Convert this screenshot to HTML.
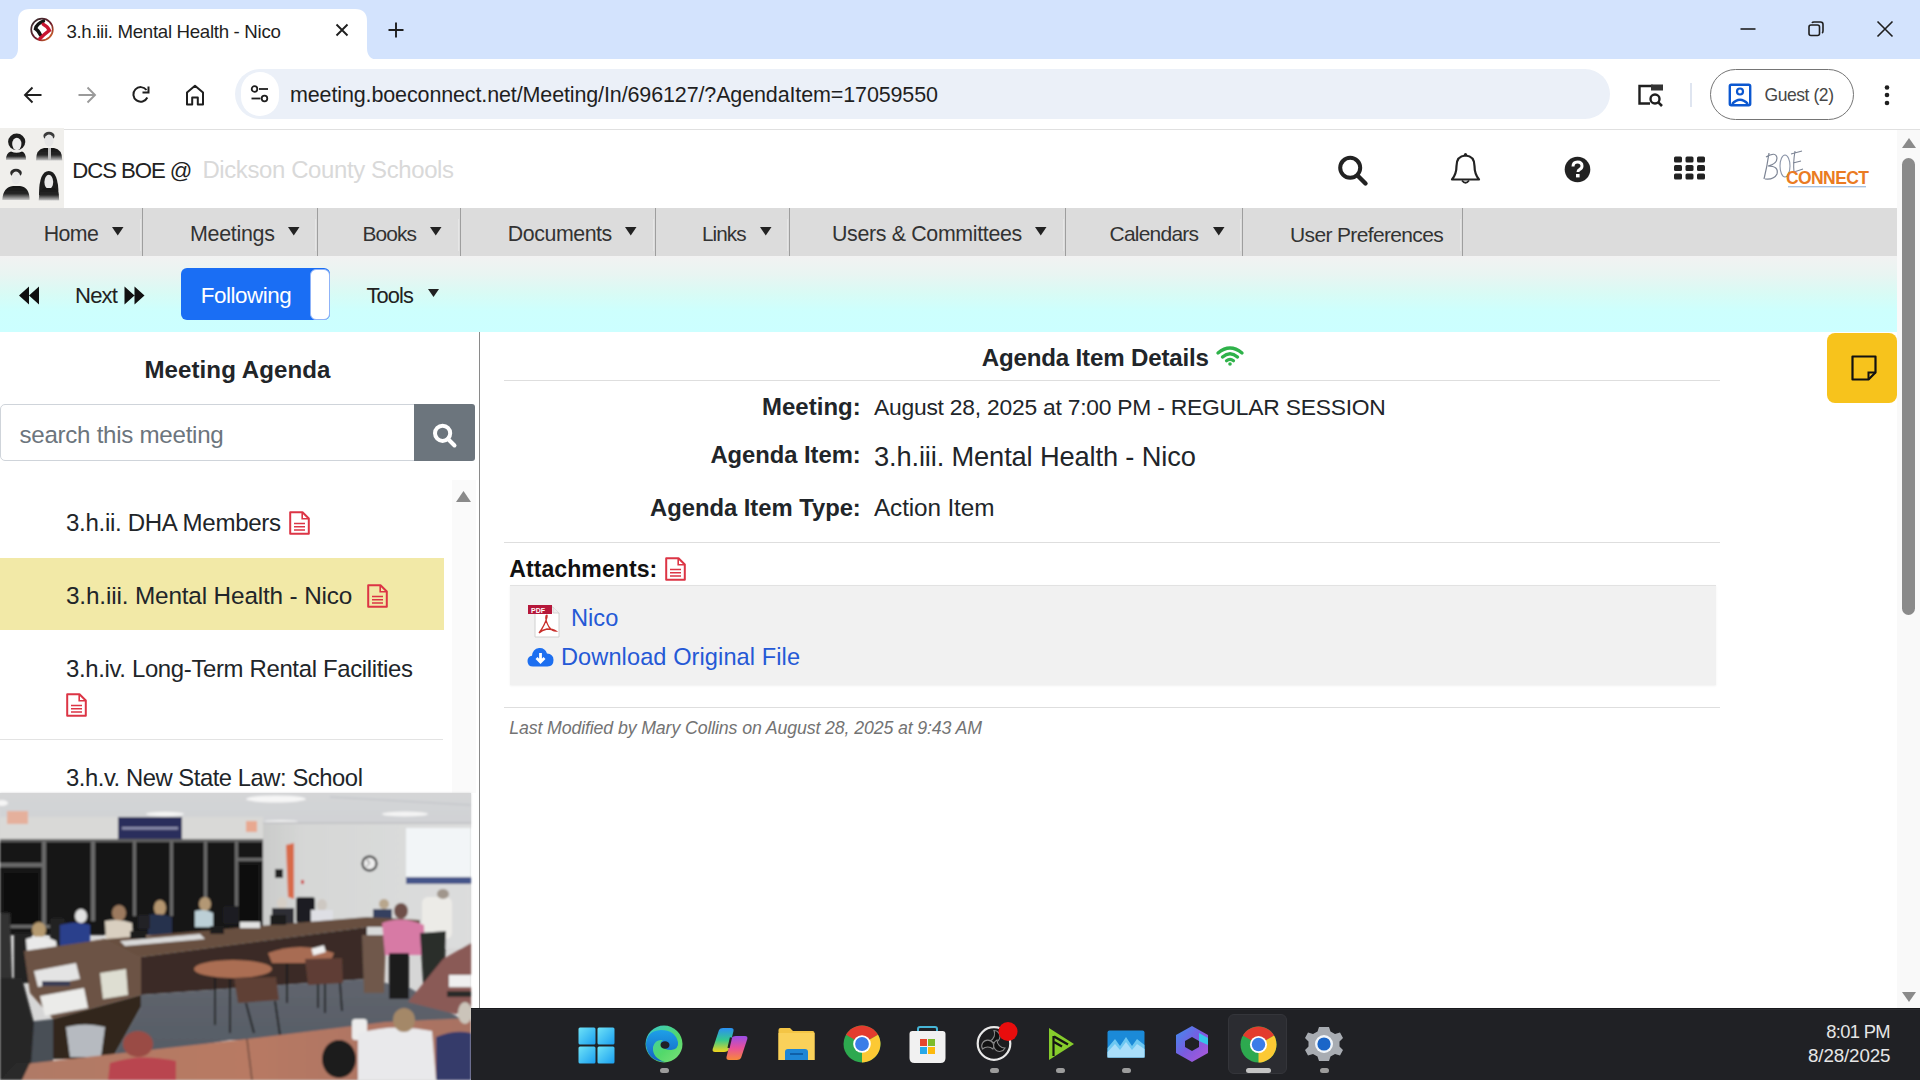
<!DOCTYPE html>
<html><head><meta charset="utf-8"><title>3.h.iii. Mental Health - Nico</title>
<style>
*{margin:0;padding:0;box-sizing:border-box}
html,body{width:1920px;height:1080px;overflow:hidden;background:#fff;font-family:"Liberation Sans",sans-serif;color:#212529}
.a{position:absolute}
.t{position:absolute;white-space:nowrap;line-height:1}
svg{display:block;overflow:visible}
</style></head><body>
<div class="a" style="left:0;top:0;width:1920px;height:59px;background:#d3e3fd"></div>
<svg class="a" style="left:0;top:0" width="400" height="60"><path d="M6 60 Q18 60 18 48 L18 21 Q18 9 30 9 L355 9 Q367 9 367 21 L367 48 Q367 60 379 60 Z" fill="#fff"/></svg>
<svg class="a" style="left:30px;top:18px" width="24" height="24" viewBox="0 0 24 24">
<defs><linearGradient id="fr" x1="0" y1="0" x2="1" y2="1"><stop offset="0" stop-color="#333"/><stop offset="0.55" stop-color="#6a1b2a"/><stop offset="1" stop-color="#e8742c"/></linearGradient></defs>
<circle cx="12" cy="11.5" r="10.8" fill="#fff" stroke="url(#fr)" stroke-width="1.7"/>
<path d="M13.5 3.2 Q6.5 6 5.5 10.8 Q8.5 12.5 10.5 17.2" fill="none" stroke="#151515" stroke-width="3.4" stroke-linecap="round"/>
<path d="M13.2 6.2 Q17.8 8.5 19.4 12.4 Q14.5 16 9.8 20.8" fill="none" stroke="#c81430" stroke-width="3.4" stroke-linecap="round"/>
</svg>
<div class="t" style="left:66.40px;top:23.00px;font-size:18.72px;letter-spacing:-0.324px;color:#1f1f1f;font-weight:normal;font-style:normal;">3.h.iii. Mental Health - Nico</div>
<svg class="a" style="left:334px;top:22px" width="16" height="16" viewBox="0 0 16 16"><path d="M2.5 2.5 L13.5 13.5 M13.5 2.5 L2.5 13.5" stroke="#1f1f1f" stroke-width="1.9"/></svg>
<svg class="a" style="left:387px;top:21px" width="18" height="18" viewBox="0 0 18 18"><path d="M9 1.5 V16.5 M1.5 9 H16.5" stroke="#1f1f1f" stroke-width="1.9"/></svg>
<svg class="a" style="left:1738px;top:19px" width="20" height="20" viewBox="0 0 20 20"><path d="M2.5 10 H17.5" stroke="#1f1f1f" stroke-width="1.6"/></svg>
<svg class="a" style="left:1806px;top:19px" width="20" height="20" viewBox="0 0 20 20"><rect x="3" y="6" width="10.5" height="10.5" rx="2" fill="none" stroke="#1f1f1f" stroke-width="1.6"/><path d="M6 4 Q6.5 3 8 3 H14.5 Q17 3 17 5.5 V12 Q17 13.5 16 14" fill="none" stroke="#1f1f1f" stroke-width="1.6"/></svg>
<svg class="a" style="left:1875px;top:19px" width="20" height="20" viewBox="0 0 20 20"><path d="M2.5 2.5 L17.5 17.5 M17.5 2.5 L2.5 17.5" stroke="#1f1f1f" stroke-width="1.6"/></svg>
<div class="a" style="left:0;top:59px;width:1920px;height:70px;background:#fff"></div>
<div class="a" style="left:0;top:129px;width:1920px;height:1px;background:#e0e0e0"></div>
<svg class="a" style="left:23px;top:85px" width="20" height="20" viewBox="0 0 20 20"><path d="M18.5 10 H2.5 M9.5 2.5 L2 10 L9.5 17.5" fill="none" stroke="#1f1f1f" stroke-width="1.9"/></svg>
<svg class="a" style="left:77px;top:85px" width="20" height="20" viewBox="0 0 20 20"><path d="M1.5 10 H17.5 M10.5 2.5 L18 10 L10.5 17.5" fill="none" stroke="#9a9a9a" stroke-width="1.9"/></svg>
<svg class="a" style="left:131px;top:85px" width="20" height="20" viewBox="0 0 20 20"><path d="M16.3 12.5 A7.3 7.3 0 1 1 15.5 5" fill="none" stroke="#1f1f1f" stroke-width="2"/><path d="M17.5 1.5 V7.5 H11.5" fill="none" stroke="#1f1f1f" stroke-width="2"/></svg>
<svg class="a" style="left:185px;top:84px" width="20" height="22" viewBox="0 0 20 22"><path d="M2 20.5 V8.5 L10 1.8 L18 8.5 V20.5 H12.8 V13.5 H7.2 V20.5 Z" fill="none" stroke="#1f1f1f" stroke-width="2" stroke-linejoin="round"/></svg>
<div class="a" style="left:235px;top:69px;width:1375px;height:50px;background:#ebf0f8;border-radius:25px"></div>
<div class="a" style="left:241px;top:72px;width:38px;height:44px;background:#fff;border-radius:22px"></div>
<svg class="a" style="left:249px;top:83px" width="22" height="22" viewBox="0 0 22 22"><circle cx="5.5" cy="6" r="2.8" fill="none" stroke="#1f1f1f" stroke-width="1.8"/><path d="M10 6 H19" stroke="#1f1f1f" stroke-width="1.8"/><circle cx="15.5" cy="15.5" r="2.8" fill="none" stroke="#1f1f1f" stroke-width="1.8"/><path d="M2.5 15.5 H11.5" stroke="#1f1f1f" stroke-width="1.8"/></svg>
<div class="t" style="left:290.00px;top:85.00px;font-size:21.50px;letter-spacing:-0.128px;color:#1f1f1f;font-weight:normal;font-style:normal;">meeting.boeconnect.net/Meeting/In/696127/?AgendaItem=17059550</div>
<svg class="a" style="left:1637px;top:83px" width="28" height="26" viewBox="0 0 28 26"><path d="M13 20.5 H2.5 V3 H16" fill="none" stroke="#1f1f1f" stroke-width="2.4"/><rect x="14" y="1.5" width="12" height="6" fill="#333"/><circle cx="18" cy="16" r="4.5" fill="none" stroke="#1f1f1f" stroke-width="2.4"/><path d="M21.3 19.3 L25 23" stroke="#1f1f1f" stroke-width="2.6"/></svg>
<div class="a" style="left:1690px;top:83px;width:2px;height:24px;background:#dfe5f0"></div>
<div class="a" style="left:1710px;top:69px;width:144px;height:51px;border:1.6px solid #757575;border-radius:26px"></div>
<svg class="a" style="left:1728px;top:83px" width="24" height="24" viewBox="0 0 24 24"><rect x="1.8" y="1.8" width="20.4" height="20.4" rx="1.5" fill="none" stroke="#0b57d0" stroke-width="2.4"/><circle cx="12" cy="8.5" r="3" fill="none" stroke="#0b57d0" stroke-width="2.2"/><path d="M4 21 Q12 12.5 20 21" fill="none" stroke="#0b57d0" stroke-width="2.4"/></svg>
<div class="t" style="left:1764.50px;top:87.00px;font-size:17.49px;letter-spacing:-0.427px;color:#474747;font-weight:normal;font-style:normal;">Guest (2)</div>
<svg class="a" style="left:1881px;top:84px" width="12" height="24" viewBox="0 0 12 24"><circle cx="6" cy="3.5" r="2.3" fill="#1f1f1f"/><circle cx="6" cy="11" r="2.3" fill="#1f1f1f"/><circle cx="6" cy="19" r="2.3" fill="#1f1f1f"/></svg>
<div class="a" style="left:0;top:130px;width:1897px;height:78px;background:#fff"></div>
<svg class="a" style="left:0;top:130px" width="64" height="78" viewBox="0 2 64 78">
<defs><linearGradient id="pg" x1="0" y1="0" x2="0" y2="1"><stop offset="0" stop-color="#151515"/><stop offset="0.55" stop-color="#262626"/><stop offset="1" stop-color="#c8c8c8"/></linearGradient>
<filter id="lb"><feGaussianBlur stdDeviation="0.45"/></filter></defs>
<rect width="64" height="80" fill="#f0efec"/>
<g filter="url(#lb)">
<ellipse cx="16.7" cy="13.8" rx="8.6" ry="8.3" fill="#1c1c1c"/>
<ellipse cx="16.8" cy="16" rx="4.6" ry="6.2" fill="#ececec"/>
<path d="M6 32 Q6 24.5 11 23.5 Q16.5 26 22 23.5 Q26 24.5 26 32 Z" fill="url(#pg)"/>
<ellipse cx="49" cy="8" rx="5.6" ry="4.2" fill="#3a3a3a"/>
<ellipse cx="49" cy="12.5" rx="4.6" ry="6" fill="#e6e6e6"/>
<path d="M36 32.5 Q36 21 44 20 L54 20 Q62.3 21 62.3 32.5 Z" fill="url(#pg)"/>
<rect x="48" y="20" width="3" height="12" fill="#bdbdbd"/>
<ellipse cx="16" cy="45" rx="5.8" ry="4.2" fill="#2c2c2c"/>
<ellipse cx="16" cy="50" rx="4.6" ry="6.5" fill="#e8e8e8"/>
<path d="M2.3 72 Q3 59 13 58 L20 58 Q29.6 59 29.6 72 Z" fill="url(#pg)"/>
<path d="M39 67 Q39 43 48.8 43 Q58.5 43 58.5 67 Z" fill="#1e1e1e"/>
<ellipse cx="48.8" cy="54" rx="4.4" ry="7.2" fill="#e8e8e8"/>
<path d="M38.7 72.5 Q39 61 44 60 L54 60 Q59.2 61 59.2 72.5 Z" fill="url(#pg)"/>
</g></svg>
<div class="t" style="left:72.30px;top:160.00px;font-size:22.19px;letter-spacing:-1.074px;color:#222;font-weight:normal;font-style:normal;">DCS BOE @</div>
<div class="t" style="left:202.40px;top:158.00px;font-size:23.94px;letter-spacing:-0.373px;color:#d9d9d9;font-weight:normal;font-style:normal;">Dickson County Schools</div>
<svg class="a" style="left:1336px;top:154px" width="34" height="34" viewBox="0 0 34 34"><circle cx="14.2" cy="13.8" r="10" fill="none" stroke="#222" stroke-width="4"/><path d="M21.5 21.5 L29.5 29.5" stroke="#222" stroke-width="4.4" stroke-linecap="round"/></svg>
<svg class="a" style="left:1450px;top:152px" width="32" height="34" viewBox="0 0 32 34"><path d="M15.5 3.5 Q24.5 4 24.5 14 Q24.5 22 29 27.5 H2 Q6.5 22 6.5 14 Q6.5 4 15.5 3.5 Z" fill="none" stroke="#222" stroke-width="2.2" stroke-linejoin="round"/><path d="M12 28.5 Q15.5 33 19 28.5" fill="none" stroke="#222" stroke-width="1.8"/><circle cx="15.5" cy="2.5" r="1.6" fill="#222"/></svg>
<svg class="a" style="left:1564px;top:156px" width="27" height="27" viewBox="0 0 27 27"><circle cx="13.5" cy="13.5" r="12.8" fill="#222"/><path d="M9 10.5 Q9 6 13.5 6 Q18 6 18 10 Q18 12.5 15.5 13.5 Q14 14.2 14 16" fill="none" stroke="#fff" stroke-width="3"/><rect x="12" y="18" width="3.6" height="3.4" fill="#fff"/></svg>
<svg class="a" style="left:1673px;top:155px" width="33" height="26" viewBox="0 0 33 26"><g fill="#222">
<rect x="1" y="1.5" width="8" height="6" rx="1.5"/><rect x="12.5" y="1.5" width="8" height="6" rx="1.5"/><rect x="24" y="1.5" width="8" height="6" rx="1.5"/>
<rect x="1" y="10" width="8" height="6" rx="1.5"/><rect x="12.5" y="10" width="8" height="6" rx="1.5"/><rect x="24" y="10" width="8" height="6" rx="1.5"/>
<rect x="1" y="18.5" width="8" height="6" rx="1.5"/><rect x="12.5" y="18.5" width="8" height="6" rx="1.5"/><rect x="24" y="18.5" width="8" height="6" rx="1.5"/>
</g></svg>
<svg class="a" style="left:1760px;top:145px" width="112" height="46" viewBox="0 0 112 46">
<path d="M9 8 Q7 22 4 34 M6 12 Q16 6 17 13 Q17 19 8 21 Q19 21 17 29 Q14 35 5 34" fill="none" stroke="#7d8595" stroke-width="1.2"/>
<ellipse cx="25" cy="21" rx="5" ry="11" fill="none" stroke="#8a94a8" stroke-width="1.1"/>
<path d="M31 9 L42 6 M35 6 Q33 18 34 27 M33 18 L41 16 M34 27 L43 24" fill="none" stroke="#7d8595" stroke-width="1.1"/>
<text x="26" y="38.5" font-family="Liberation Sans" font-weight="bold" font-size="17.5" fill="#ea7b23" letter-spacing="-0.6">CONNECT</text>
<rect x="28" y="41" width="78" height="1.4" fill="#a9c2e0"/>
</svg>
<div class="a" style="left:0;top:208px;width:1897px;height:48px;background:#dcdcdc"></div>
<div class="t" style="left:43.75px;top:224.00px;font-size:21.33px;letter-spacing:-0.631px;color:#333;font-weight:normal;font-style:normal;">Home</div>
<svg class="a" style="left:112.0px;top:227px" width="12" height="9" viewBox="0 0 12 9"><path d="M0 0 H11.5 L5.75 8.5 Z" fill="#222"/></svg>
<div class="t" style="left:190.00px;top:224.00px;font-size:21.46px;letter-spacing:-0.297px;color:#333;font-weight:normal;font-style:normal;">Meetings</div>
<svg class="a" style="left:287.5px;top:227px" width="12" height="9" viewBox="0 0 12 9"><path d="M0 0 H11.5 L5.75 8.5 Z" fill="#222"/></svg>
<div class="t" style="left:362.50px;top:224.00px;font-size:20.93px;letter-spacing:-0.914px;color:#333;font-weight:normal;font-style:normal;">Books</div>
<svg class="a" style="left:430.0px;top:227px" width="12" height="9" viewBox="0 0 12 9"><path d="M0 0 H11.5 L5.75 8.5 Z" fill="#222"/></svg>
<div class="t" style="left:507.80px;top:224.00px;font-size:21.35px;letter-spacing:-0.432px;color:#333;font-weight:normal;font-style:normal;">Documents</div>
<svg class="a" style="left:625.0px;top:227px" width="12" height="9" viewBox="0 0 12 9"><path d="M0 0 H11.5 L5.75 8.5 Z" fill="#222"/></svg>
<div class="t" style="left:702.00px;top:224.00px;font-size:20.71px;letter-spacing:-0.959px;color:#333;font-weight:normal;font-style:normal;">Links</div>
<svg class="a" style="left:759.5px;top:227px" width="12" height="9" viewBox="0 0 12 9"><path d="M0 0 H11.5 L5.75 8.5 Z" fill="#222"/></svg>
<div class="t" style="left:832.00px;top:224.00px;font-size:21.38px;letter-spacing:-0.338px;color:#333;font-weight:normal;font-style:normal;">Users &amp; Committees</div>
<svg class="a" style="left:1034.5px;top:227px" width="12" height="9" viewBox="0 0 12 9"><path d="M0 0 H11.5 L5.75 8.5 Z" fill="#222"/></svg>
<div class="t" style="left:1109.50px;top:224.00px;font-size:20.94px;letter-spacing:-0.740px;color:#333;font-weight:normal;font-style:normal;">Calendars</div>
<svg class="a" style="left:1212.5px;top:227px" width="12" height="9" viewBox="0 0 12 9"><path d="M0 0 H11.5 L5.75 8.5 Z" fill="#222"/></svg>
<div class="t" style="left:1290.00px;top:224.00px;font-size:20.99px;letter-spacing:-0.635px;color:#333;font-weight:normal;font-style:normal;">User Preferences</div>
<div class="a" style="left:142.0px;top:208px;width:1.3px;height:48px;background:#9e9e9e"></div>
<div class="a" style="left:140.0px;top:219px;width:1.2px;height:32px;background:#e6e6e6"></div>
<div class="a" style="left:317.0px;top:208px;width:1.3px;height:48px;background:#9e9e9e"></div>
<div class="a" style="left:315.0px;top:219px;width:1.2px;height:32px;background:#e6e6e6"></div>
<div class="a" style="left:460.0px;top:208px;width:1.3px;height:48px;background:#9e9e9e"></div>
<div class="a" style="left:458.0px;top:219px;width:1.2px;height:32px;background:#e6e6e6"></div>
<div class="a" style="left:654.5px;top:208px;width:1.3px;height:48px;background:#9e9e9e"></div>
<div class="a" style="left:652.5px;top:219px;width:1.2px;height:32px;background:#e6e6e6"></div>
<div class="a" style="left:789.2px;top:208px;width:1.3px;height:48px;background:#9e9e9e"></div>
<div class="a" style="left:787.2px;top:219px;width:1.2px;height:32px;background:#e6e6e6"></div>
<div class="a" style="left:1065.0px;top:208px;width:1.3px;height:48px;background:#9e9e9e"></div>
<div class="a" style="left:1063.0px;top:219px;width:1.2px;height:32px;background:#e6e6e6"></div>
<div class="a" style="left:1242.0px;top:208px;width:1.3px;height:48px;background:#9e9e9e"></div>
<div class="a" style="left:1240.0px;top:219px;width:1.2px;height:32px;background:#e6e6e6"></div>
<div class="a" style="left:1461.5px;top:208px;width:1.3px;height:48px;background:#9e9e9e"></div>
<div class="a" style="left:1459.5px;top:219px;width:1.2px;height:32px;background:#e6e6e6"></div>
<div class="a" style="left:0;top:256px;width:1897px;height:76px;background:linear-gradient(#f2f2f2 0%,#e8f5f2 25%,#d8fbf5 50%,#cdfffd 72%,#ccffff 100%)"></div>
<svg class="a" style="left:19px;top:286px" width="21" height="19" viewBox="0 0 21 19"><path d="M0 9.5 L10 0.5 V18.5 Z M10 9.5 L20 0.5 V18.5 Z" fill="#111"/></svg>
<div class="t" style="left:75.00px;top:285.00px;font-size:22.08px;letter-spacing:-0.803px;color:#222;font-weight:normal;font-style:normal;">Next</div>
<svg class="a" style="left:124px;top:286px" width="21" height="19" viewBox="0 0 21 19"><path d="M0.5 0.5 L10.5 9.5 L0.5 18.5 Z M10.5 0.5 L20.5 9.5 L10.5 18.5 Z" fill="#111"/></svg>
<div class="a" style="left:181px;top:268px;width:149px;height:52px;background:#1a6ef4;border-radius:6px"></div>
<div class="a" style="left:309.5px;top:269px;width:20px;height:50.5px;background:#fff;border-radius:6px;border:1px solid #8fb3f8"></div>
<div class="t" style="left:200.80px;top:285.00px;font-size:22.40px;letter-spacing:-0.452px;color:#fff;font-weight:normal;font-style:normal;">Following</div>
<div class="t" style="left:366.50px;top:285.00px;font-size:21.80px;letter-spacing:-0.848px;color:#222;font-weight:normal;font-style:normal;">Tools</div>
<svg class="a" style="left:427.5px;top:289px" width="12" height="9" viewBox="0 0 12 9"><path d="M0 0 H11 L5.5 8 Z" fill="#222"/></svg>
<div class="a" style="left:479px;top:332px;width:1px;height:676px;background:#8a8a8a"></div>
<div class="t" style="left:144.50px;top:358.00px;font-size:24.09px;letter-spacing:0.065px;color:#212529;font-weight:bold;font-style:normal;">Meeting Agenda</div>
<div class="a" style="left:0;top:404px;width:420px;height:57px;border:1px solid #cfd4da;border-radius:5px 0 0 5px;background:#fff"></div>
<div class="t" style="left:19.50px;top:423.00px;font-size:24.13px;letter-spacing:-0.277px;color:#6c757d;font-weight:normal;font-style:normal;">search this meeting</div>
<div class="a" style="left:414px;top:404px;width:61px;height:57px;background:#6c757d;border-radius:0 3px 3px 0"></div>
<svg class="a" style="left:432px;top:423px" width="26" height="26" viewBox="0 0 26 26"><circle cx="10.6" cy="10.3" r="7.6" fill="none" stroke="#fff" stroke-width="4"/><path d="M16 16 L22.5 22.5" stroke="#fff" stroke-width="4" stroke-linecap="round"/></svg>
<div class="a" style="left:452px;top:480px;width:24px;height:313px;background:#fafafa"></div>
<svg class="a" style="left:456px;top:491px" width="15" height="11" viewBox="0 0 15 11"><path d="M0 11 L7.5 0 L15 11 Z" fill="#8a8a8a"/></svg>
<div class="t" style="left:66.00px;top:511.00px;font-size:24.08px;letter-spacing:-0.321px;color:#212529;font-weight:normal;font-style:normal;">3.h.ii. DHA Members</div>
<svg class="a" style="left:289px;top:510.5px" width="21.0" height="24.0" viewBox="0 0 21 24"><path d="M1.2 1.2 H13.5 L19.8 7.5 V22.8 H1.2 Z" fill="none" stroke="#dc3545" stroke-width="2" stroke-linejoin="round"/><path d="M13.2 1.5 V7.8 H19.5" fill="none" stroke="#dc3545" stroke-width="1.6"/><path d="M5 12.5 H16 M5 15.8 H16 M5 19 H16" stroke="#dc3545" stroke-width="1.6"/></svg>
<div class="a" style="left:0;top:557.5px;width:444px;height:72.5px;background:#f2e9a7"></div>
<div class="t" style="left:66.00px;top:584.00px;font-size:24.34px;letter-spacing:-0.156px;color:#212529;font-weight:normal;font-style:normal;">3.h.iii. Mental Health - Nico</div>
<svg class="a" style="left:367px;top:584px" width="21.0" height="24.0" viewBox="0 0 21 24"><path d="M1.2 1.2 H13.5 L19.8 7.5 V22.8 H1.2 Z" fill="none" stroke="#dc3545" stroke-width="2" stroke-linejoin="round"/><path d="M13.2 1.5 V7.8 H19.5" fill="none" stroke="#dc3545" stroke-width="1.6"/><path d="M5 12.5 H16 M5 15.8 H16 M5 19 H16" stroke="#dc3545" stroke-width="1.6"/></svg>
<div class="t" style="left:66.00px;top:657.00px;font-size:23.93px;letter-spacing:-0.343px;color:#212529;font-weight:normal;font-style:normal;">3.h.iv. Long-Term Rental Facilities</div>
<svg class="a" style="left:66px;top:692.5px" width="21.0" height="24.0" viewBox="0 0 21 24"><path d="M1.2 1.2 H13.5 L19.8 7.5 V22.8 H1.2 Z" fill="none" stroke="#dc3545" stroke-width="2" stroke-linejoin="round"/><path d="M13.2 1.5 V7.8 H19.5" fill="none" stroke="#dc3545" stroke-width="1.6"/><path d="M5 12.5 H16 M5 15.8 H16 M5 19 H16" stroke="#dc3545" stroke-width="1.6"/></svg>
<div class="a" style="left:0;top:738.5px;width:443px;height:1.3px;background:#e3e3e3"></div>
<div class="t" style="left:66.00px;top:766.00px;font-size:23.79px;letter-spacing:-0.443px;color:#212529;font-weight:normal;font-style:normal;">3.h.v. New State Law: School</div>
<div class="t" style="left:981.70px;top:346.00px;font-size:24.10px;letter-spacing:-0.169px;color:#212529;font-weight:bold;font-style:normal;">Agenda Item Details</div>
<svg class="a" style="left:1216px;top:346px" width="28" height="20" viewBox="0 0 28 20"><path d="M2 7 Q14 -3 26 7" fill="none" stroke="#2fb24a" stroke-width="3.4" stroke-linecap="round"/><path d="M6.5 11 Q14 4.5 21.5 11" fill="none" stroke="#2fb24a" stroke-width="3.4" stroke-linecap="round"/><path d="M10.5 14.8 Q14 12 17.5 14.8" fill="none" stroke="#2fb24a" stroke-width="3.2" stroke-linecap="round"/><circle cx="14" cy="18" r="1.8" fill="#2fb24a"/></svg>
<div class="a" style="left:504px;top:379.5px;width:1216px;height:1.3px;background:#dedede"></div>
<div class="t" style="left:761.90px;top:395.00px;font-size:23.95px;letter-spacing:0.066px;color:#212529;font-weight:bold;font-style:normal;">Meeting:</div>
<div class="t" style="left:710.40px;top:443.00px;font-size:23.79px;letter-spacing:-0.026px;color:#212529;font-weight:bold;font-style:normal;">Agenda Item:</div>
<div class="t" style="left:650.00px;top:496.00px;font-size:23.80px;letter-spacing:-0.021px;color:#212529;font-weight:bold;font-style:normal;">Agenda Item Type:</div>
<div class="t" style="left:874.00px;top:396.00px;font-size:22.83px;letter-spacing:-0.225px;color:#212529;font-weight:normal;font-style:normal;">August 28, 2025 at 7:00 PM - REGULAR SESSION</div>
<div class="t" style="left:874.00px;top:443.00px;font-size:27.28px;letter-spacing:-0.142px;color:#212529;font-weight:normal;font-style:normal;">3.h.iii. Mental Health - Nico</div>
<div class="t" style="left:874.00px;top:496.00px;font-size:24.32px;letter-spacing:-0.123px;color:#212529;font-weight:normal;font-style:normal;">Action Item</div>
<div class="a" style="left:504px;top:542px;width:1216px;height:1.3px;background:#dedede"></div>
<div class="t" style="left:509.20px;top:558.00px;font-size:23.07px;letter-spacing:0.062px;color:#111;font-weight:bold;font-style:normal;">Attachments:</div>
<svg class="a" style="left:665px;top:557px" width="21.0" height="24.0" viewBox="0 0 21 24"><path d="M1.2 1.2 H13.5 L19.8 7.5 V22.8 H1.2 Z" fill="none" stroke="#dc3545" stroke-width="2" stroke-linejoin="round"/><path d="M13.2 1.5 V7.8 H19.5" fill="none" stroke="#dc3545" stroke-width="1.6"/><path d="M5 12.5 H16 M5 15.8 H16 M5 19 H16" stroke="#dc3545" stroke-width="1.6"/></svg>
<div class="a" style="left:510px;top:585px;width:1206px;height:100px;background:#f1f1f1;border-top:1.5px solid #e2e2e2;box-shadow:0 1px 2px rgba(0,0,0,0.06)"></div>
<svg class="a" style="left:527px;top:603px" width="36" height="36" viewBox="0 0 36 36">
<path d="M8 4 H26 L32 10 V34 H8 Z" fill="#fff" stroke="#d0d0d0" stroke-width="1"/>
<path d="M26 4 V10 H32" fill="#eee" stroke="#ccc" stroke-width="0.8"/>
<rect x="1" y="2" width="24" height="9" fill="#b5173a"/>
<text x="4" y="9.5" font-family="Liberation Sans" font-weight="bold" font-size="7" fill="#fff">PDF</text>
<path d="M12 30 Q18 22 20 14 Q20.5 11 19 13 Q18 17 22 24 Q25 28 29 28 Q26 26 20 26 Q15 27 12 30 Z" fill="none" stroke="#c9302c" stroke-width="1.3"/>
</svg>
<div class="t" style="left:570.90px;top:607.00px;font-size:23.65px;letter-spacing:0.066px;color:#2559d6;font-weight:normal;font-style:normal;">Nico</div>
<svg class="a" style="left:527px;top:646px" width="27" height="21" viewBox="0 0 27 21"><path d="M6 20.5 Q0.5 20.5 0.5 15 Q0.5 10.5 5 9.8 Q5.5 3 12 2 Q18 1.5 20 7.5 Q26.5 8 26.5 14 Q26.5 20.5 20.5 20.5 Z" fill="#1d6ff0"/><path d="M13.5 7 V15.5 M9.5 12 L13.5 16 L17.5 12" fill="none" stroke="#fff" stroke-width="2.8"/></svg>
<div class="t" style="left:561.00px;top:646.00px;font-size:23.58px;letter-spacing:0.086px;color:#2559d6;font-weight:normal;font-style:normal;">Download Original File</div>
<div class="a" style="left:504px;top:706.5px;width:1216px;height:1.3px;background:#dedede"></div>
<div class="t" style="left:509.20px;top:720.00px;font-size:17.75px;letter-spacing:-0.127px;color:#737373;font-weight:normal;font-style:italic;">Last Modified by Mary Collins on August 28, 2025 at 9:43 AM</div>
<div class="a" style="left:1827px;top:332.5px;width:70px;height:70px;background:#f7c31c;border-radius:8px"></div>
<svg class="a" style="left:1849px;top:353px" width="30" height="30" viewBox="0 0 30 30"><path d="M3.5 3.5 H26.5 V19.5 L19.5 26.5 H3.5 Z" fill="none" stroke="#111" stroke-width="2.2" stroke-linejoin="round"/><path d="M19.5 26.5 V19.5 H26.5" fill="none" stroke="#111" stroke-width="2"/></svg>
<div class="a" style="left:1897px;top:130px;width:23px;height:878px;background:#f9f9f9"></div>
<svg class="a" style="left:1901.5px;top:138px" width="14" height="10" viewBox="0 0 14 10"><path d="M0 10 L7 0 L14 10 Z" fill="#8a8a8a"/></svg>
<div class="a" style="left:1902px;top:158px;width:13px;height:457px;background:#8a8a8a;border-radius:7px"></div>
<svg class="a" style="left:1901.5px;top:992px" width="14" height="10" viewBox="0 0 14 10"><path d="M0 0 L14 0 L7 10 Z" fill="#8a8a8a"/></svg>
<svg class="a" style="left:0;top:793px" width="471" height="287" viewBox="0 0 471 287">
<defs>
<filter id="vb" x="-5%" y="-5%" width="110%" height="110%"><feGaussianBlur stdDeviation="1.1"/></filter>
<linearGradient id="ceil" x1="0" y1="0" x2="0" y2="1"><stop offset="0" stop-color="#d4d5d7"/><stop offset="1" stop-color="#d0d2d5"/></linearGradient>
<linearGradient id="carp" x1="0" y1="0" x2="0" y2="1"><stop offset="0" stop-color="#60656e"/><stop offset="1" stop-color="#555b64"/></linearGradient>
<linearGradient id="ftab" x1="0" y1="0" x2="1" y2="0"><stop offset="0" stop-color="#b07a66"/><stop offset="0.5" stop-color="#b87a64"/><stop offset="1" stop-color="#a87262"/></linearGradient>
<linearGradient id="wall" x1="0" y1="0" x2="1" y2="0"><stop offset="0" stop-color="#cacbca"/><stop offset="0.2" stop-color="#d6d7d6"/><stop offset="1" stop-color="#dcdddd"/></linearGradient>
</defs>
<rect width="471" height="287" fill="#d6d6d6"/>
<g filter="url(#vb)">
<!-- ceiling -->
<rect x="0" y="0" width="471" height="30" fill="url(#ceil)"/>
<path d="M330 4 L471 12" stroke="#b9bcc2" stroke-width="0.8"/>
<ellipse cx="276" cy="6" rx="30" ry="3.5" fill="#f6f6f6"/>
<ellipse cx="405" cy="21" rx="23" ry="2.5" fill="#f4f4f4"/>
<ellipse cx="281" cy="29" rx="17" ry="2" fill="#f0f0f0"/>
<ellipse cx="165" cy="21" rx="19" ry="2.2" fill="#f4f4f4"/>
<ellipse cx="2" cy="10" rx="6" ry="3" fill="#f5f5f5"/>
<!-- back wall band -->
<rect x="0" y="24" width="263" height="24" fill="#d9d9d7"/>
<rect x="7" y="18" width="21" height="13" fill="#e5b09c"/>
<rect x="246" y="28" width="11" height="11" fill="#e8a890"/>
<rect x="118" y="24" width="64" height="23" fill="#2c2f5c"/>
<rect x="122" y="34" width="56" height="2.5" fill="#8f92b0"/>
<!-- windows -->
<rect x="0" y="47" width="263" height="95" fill="#191919"/>
<rect x="0" y="46" width="263" height="3" fill="#5e5e5e"/>
<g fill="#6a6a6a">
<rect x="42" y="48" width="4" height="85"/><rect x="91" y="48" width="4" height="80"/>
<rect x="133" y="48" width="3" height="75"/><rect x="170" y="48" width="3" height="75"/>
<rect x="204" y="48" width="3" height="70"/><rect x="235" y="48" width="3" height="80"/>
<rect x="0" y="70" width="42" height="4"/><rect x="235" y="65" width="28" height="3"/>
<rect x="0" y="132" width="50" height="3"/>
</g>
<rect x="4" y="80" width="34" height="52" fill="#0e0e0e"/>
<rect x="240" y="72" width="18" height="55" fill="#111"/>
<!-- right wall -->
<rect x="263" y="30" width="208" height="125" fill="url(#wall)"/>
<rect x="263" y="29" width="208" height="2" fill="#c4c5c7"/>
<path d="M286 52 L294 50 L294 106 L288 104 Z" fill="#d86a48"/>
<rect x="275" y="76" width="8" height="9" fill="#242424"/>
<rect x="301" y="87" width="3" height="4" fill="#c44"/>
<circle cx="369.5" cy="70.5" r="7" fill="#ededed" stroke="#111" stroke-width="2"/><path d="M369.5 70.5 L367 66 M369.5 70.5 L366 74" stroke="#333" stroke-width="0.8"/>
<rect x="406" y="35" width="65" height="51" fill="#f2f5f7"/>
<rect x="406" y="84" width="65" height="7" fill="#44558a"/>
<!-- back row people -->
<ellipse cx="282" cy="110" rx="5" ry="6" fill="#d6cfc6"/>
<rect x="272" y="115" width="22" height="17" fill="#2e2e34"/>
<rect x="296" y="104" width="19" height="26" rx="3" fill="#1e1e21"/>
<ellipse cx="322" cy="112" rx="5" ry="6" fill="#cdc8c2"/>
<rect x="311" y="117" width="22" height="16" fill="#dedfe4"/>
<ellipse cx="384" cy="111" rx="5" ry="5" fill="#b8a68c"/>
<rect x="373" y="116" width="19" height="17" fill="#36415e"/>
<rect x="422" y="104" width="30" height="42" rx="6" fill="#ecebe7"/>
<ellipse cx="443" cy="101" rx="6" ry="5" fill="#a0968c"/>
<!-- left seated people -->
<rect x="14" y="140" width="18" height="50" fill="#222224"/>
<rect x="50" y="125" width="15" height="30" rx="3" fill="#202022"/>
<ellipse cx="39" cy="137" rx="7" ry="8" fill="#b59a70"/>
<path d="M26 146 Q39 140 56 148 L60 175 L28 176 Z" fill="#e9e9e9"/>
<ellipse cx="81" cy="123" rx="6" ry="7" fill="#e2e2e2"/>
<path d="M60 132 Q78 127 90 132 L90 158 L60 156 Z" fill="#2a3f8c"/>
<ellipse cx="119" cy="120" rx="7" ry="8" fill="#9c7a5e"/>
<path d="M105 128 Q119 125 132 130 L133 147 L106 148 Z" fill="#d9cfc0"/>
<ellipse cx="160" cy="115" rx="6" ry="8" fill="#b59670"/>
<path d="M148 122 Q160 119 172 124 L172 142 L148 142 Z" fill="#28324e"/>
<ellipse cx="205" cy="111" rx="6" ry="7" fill="#b39874"/>
<path d="M195 118 Q205 115 213 120 L213 134 L195 134 Z" fill="#bccfd6"/>
<rect x="223" y="113" width="16" height="18" rx="3" fill="#1f1f21"/>
<rect x="138" y="122" width="12" height="14" rx="2" fill="#232325"/>
<!-- table back surface -->
<path d="M60 154 L106 146 L367 124 L420 127 L420 134 L367 134 L141 164 Z" fill="#684f40"/>
<path d="M120 148 L200 141 L205 146 L125 153 Z" fill="#d9d9d9"/>
<rect x="130" y="138" width="16" height="8" fill="#1c1c1e"/>
<rect x="210" y="133" width="14" height="8" fill="#1c1c1e"/>
<rect x="240" y="129" width="20" height="6" fill="#e2e2e2"/>
<rect x="270" y="122" width="16" height="10" fill="#1a1a1c"/>
<!-- left arm surface -->
<path d="M24 158 L106 146 L141 164 L141 202 L53 226 L30 200 Z" fill="#6c5344"/>
<path d="M34 178 L76 170 L80 186 L38 194 Z" fill="#e4e4e4"/>
<path d="M40 203 L84 195 L88 215 L45 223 Z" fill="#ebebe9"/>
<path d="M100 180 L126 176 L128 202 L103 206 Z" fill="#deded2"/>
<rect x="42" y="188" width="28" height="5" fill="#3a3d55"/>
<!-- front panels -->
<path d="M141 164 L367 134 L367 186 L141 202 Z" fill="#3b2c26"/>
<path d="M53 226 L141 202 L141 214 L112 266 L53 266 Z" fill="#30281f"/>
<!-- carpet -->
<path d="M112 266 L141 214 L141 202 L367 186 L410 195 L471 232 L471 250 L230 247 L112 268 Z" fill="url(#carp)"/>
<path d="M0 232 L53 226 L53 270 L0 274 Z" fill="#4a4f57"/>
<!-- trash can -->
<path d="M66 234 Q85 229 105 234 L101 264 L70 264 Z" fill="#b6bac0"/>
<!-- left black chair/person -->
<path d="M0 185 L22 185 L34 230 L30 287 L0 287 Z" fill="#272727"/>
<path d="M0 120 L10 120 L12 185 L0 185 Z" fill="#303030"/>
<!-- round tables -->
<path d="M268 160 Q300 148 334 160 L330 170 L272 170 Z" fill="#a86c52"/>
<ellipse cx="233" cy="176" rx="39" ry="9" fill="#ab6e53"/>
<rect x="312" y="154" width="13" height="7" fill="#efefef" transform="rotate(-15 318 157)"/>
<g stroke="#1b1b1b" stroke-width="1.8" fill="none">
<path d="M215 184 L215 232 M230 186 L230 240 M287 170 L287 210 M318 170 L318 215"/>
<path d="M246 210 L254 240 M275 208 L280 242 M325 190 L325 220 M340 190 L342 218"/>
</g>
<path d="M234 185 L276 184 L279 207 L238 210 Z" fill="#5f3f35"/>
<path d="M305 166 L342 165 L343 190 L308 192 Z" fill="#5e3e34"/>
<!-- stool / lectern -->
<path d="M362 142 L386 142 L384 200 L364 200 Z" fill="#6f584b"/>
<!-- pink person -->
<ellipse cx="401" cy="118" rx="7" ry="8" fill="#6e5048"/>
<path d="M382 130 Q402 122 424 132 L425 162 L385 162 Z" fill="#d77aa5"/>
<rect x="389" y="160" width="20" height="46" fill="#1d1b1d"/>
<path d="M420 140 L446 138 L444 205 L424 205 Z" fill="#2b2e2c"/>
<!-- right table -->
<path d="M408 209 L443 166 L471 150 L471 218 L455 221 Z" fill="#8a5a56"/>
<rect x="449" y="182" width="22" height="12" fill="#efefef"/>
<rect x="447" y="198" width="24" height="6" fill="#2a2a2a"/>
<!-- foreground tables -->
<path d="M16 272 L247 246 L385 229 L471 225 L471 287 L16 287 Z" fill="url(#ftab)"/>
<path d="M247 246 L252 287" stroke="#6e4a3e" stroke-width="1.5"/>
<path d="M0 287 L16 270 L30 270 L22 287 Z" fill="#2a2a2a"/>
<rect x="352" y="226" width="15" height="21" rx="3" fill="#ececec"/>
<!-- foreground people -->
<ellipse cx="138" cy="251" rx="15" ry="13" fill="#9a4c44"/>
<path d="M110 270 Q140 260 176 268 L176 287 L108 287 Z" fill="#b9444f"/>
<ellipse cx="339" cy="266" rx="17" ry="19" fill="#1f1d1c"/>
<path d="M358 240 Q395 230 432 238 L436 287 L358 287 Z" fill="#e9e9eb"/>
<ellipse cx="404" cy="227" rx="11" ry="12" fill="#a48868"/>
<path d="M436 244 Q455 236 471 240 L471 287 L436 287 Z" fill="#363a6a"/>
<ellipse cx="465" cy="220" rx="7" ry="11" fill="#cbc4ba"/>
</g>
</svg>
<div class="a" style="left:471px;top:1008px;width:1449px;height:72px;background:#202125;border-top:1px solid #18191c"></div>
<div class="a" style="left:471px;top:1009px;width:1449px;height:1px;background:#2a2b30"></div>
<!-- windows logo -->
<svg class="a" style="left:578px;top:1027px" width="37" height="37" viewBox="0 0 37 37">
<defs><linearGradient id="wg" x1="0" y1="0" x2="1" y2="1"><stop offset="0" stop-color="#6fe3f7"/><stop offset="1" stop-color="#1a9ff0"/></linearGradient></defs>
<rect x="0.5" y="0.5" width="17" height="17" rx="1.5" fill="url(#wg)"/><rect x="19.5" y="0.5" width="17" height="17" rx="1.5" fill="url(#wg)"/>
<rect x="0.5" y="19.5" width="17" height="17" rx="1.5" fill="url(#wg)"/><rect x="19.5" y="19.5" width="17" height="17" rx="1.5" fill="url(#wg)"/>
</svg>
<!-- edge -->
<svg class="a" style="left:645px;top:1025px" width="38" height="38" viewBox="0 0 38 38">
<defs><linearGradient id="eg1" x1="0" y1="0" x2="1" y2="1"><stop offset="0" stop-color="#37c6d0"/><stop offset="0.6" stop-color="#53d96a"/><stop offset="1" stop-color="#7ee07a"/></linearGradient>
<linearGradient id="eg2" x1="0" y1="0" x2="0" y2="1"><stop offset="0" stop-color="#1ea0e8"/><stop offset="1" stop-color="#1561c0"/></linearGradient></defs>
<circle cx="19" cy="19" r="18.5" fill="url(#eg1)"/>
<path d="M1 20 Q1 6 16 5 Q30 5 33 17 Q34 24 26 25 Q19 25 17 21 Q14 17 18 15 Q10 14 8 22 Q7 33 20 37 Q3 36 1 20 Z" fill="url(#eg2)"/>
<ellipse cx="20" cy="20" rx="4.5" ry="3.8" fill="#202125"/>
</svg>
<!-- copilot -->
<svg class="a" style="left:712px;top:1027px" width="36" height="34" viewBox="0 0 36 34">
<defs><linearGradient id="cg1" x1="0" y1="0" x2="0" y2="1"><stop offset="0" stop-color="#2a8ff5"/><stop offset="0.5" stop-color="#35c98e"/><stop offset="1" stop-color="#f2d51c"/></linearGradient>
<linearGradient id="cg2" x1="0" y1="0" x2="0" y2="1"><stop offset="0" stop-color="#9a4ee8"/><stop offset="0.5" stop-color="#e8509a"/><stop offset="1" stop-color="#f8893a"/></linearGradient></defs>
<path d="M7 3 Q8 1 11 1 L19 1 Q22 1 21.5 4 L17 22 Q16 25 12 25 L3 25 Q0 25 0.7 22 Z" fill="url(#cg1)"/>
<path d="M29 31 Q28 33 25 33 L17 33 Q14 33 14.5 30 L19 12 Q20 9 24 9 L33 9 Q36 9 35.3 12 Z" fill="url(#cg2)"/>
<path d="M19 10.5 L16.5 21" stroke="#202125" stroke-width="2.2"/>
</svg>
<!-- folder -->
<svg class="a" style="left:778px;top:1027px" width="37" height="34" viewBox="0 0 37 34">
<path d="M0.5 3 Q0.5 1 2.5 1 H12 L15 4 H34.5 Q36.5 4 36.5 6 V33 H0.5 Z" fill="#f4c545"/>
<rect x="0.5" y="6" width="36" height="27" fill="#fad15a"/>
<path d="M7 33 V25 Q7 22 10 22 H27 Q30 22 30 25 V33 Z" fill="#1e86d6"/>
<rect x="12" y="26" width="13" height="2" fill="#0f5fa8"/>
</svg>
<!-- chrome -->
<svg class="a" style="left:843px;top:1025px" width="38" height="38" viewBox="0 0 38 38">
<circle cx="19" cy="19" r="18.5" fill="#2da94f"/>
<path d="M19 19 L3 9.8 A18.5 18.5 0 0 1 35 9.8 Z" fill="#e33b2e"/>
<path d="M19 19 L35 9.8 A18.5 18.5 0 0 1 19 37.5 Z" fill="#fcc934"/>
<circle cx="19" cy="19" r="8.8" fill="#fff"/><circle cx="19" cy="19" r="6.9" fill="#3a7de8"/>
</svg>
<!-- store -->
<svg class="a" style="left:909px;top:1026px" width="37" height="38" viewBox="0 0 37 38">
<path d="M9 8 V3 Q9 1 11 1 H26 Q28 1 28 3 V8" fill="none" stroke="#46b5d6" stroke-width="2"/>
<path d="M0.5 8 Q0.5 5 3.5 5 H33.5 Q36.5 5 36.5 8 V32 Q36.5 37 31.5 37 H5.5 Q0.5 37 0.5 32 Z" fill="#f1f1f1"/>
<rect x="11" y="13" width="7" height="7" fill="#e6452c"/><rect x="19" y="13" width="7" height="7" fill="#7cbb2a"/>
<rect x="11" y="21" width="7" height="7" fill="#26a8e8"/><rect x="19" y="21" width="7" height="7" fill="#fcb90d"/>
</svg>
<!-- OBS -->
<svg class="a" style="left:975px;top:1024px" width="46" height="40" viewBox="0 0 46 40">
<circle cx="19" cy="19.5" r="16.3" fill="#1d1d1f" stroke="#e8e8e8" stroke-width="2.2"/>
<g fill="#111" stroke="#8a8a8a" stroke-width="1.1">
<path d="M19 6.5 A6 6 0 1 1 15 17 A8 8 0 0 0 19 6.5 Z"/>
<path d="M7.5 25 A6 6 0 1 1 18 25 A8 8 0 0 0 7.5 25 Z"/>
<path d="M30 24 A6 6 0 1 1 22 16 A8 8 0 0 0 30 24 Z"/>
</g>
<circle cx="33" cy="7.5" r="9.5" fill="#e80d0d"/>
</svg>
<!-- green arrow app -->
<svg class="a" style="left:1048px;top:1027px" width="27" height="34" viewBox="0 0 27 34">
<path d="M1 1 L26 17 L1 33 Z" fill="#86cc2c"/>
<path d="M5.5 9 L5.5 29" stroke="#141414" stroke-width="2.2"/>
<path d="M6 9.5 L20 17.5 M6 15 L14 19.5" stroke="#141414" stroke-width="2.4"/>
</svg>
<!-- photos / weather -->
<svg class="a" style="left:1107px;top:1030px" width="38" height="28" viewBox="0 0 38 28">
<rect x="0.5" y="0.5" width="37" height="27" rx="2" fill="#1b8ad8"/>
<path d="M0.5 18 L8 9 L13 16 L19 7 L25 16 L30 9 L37.5 15 V27.5 H0.5 Z" fill="#6ec8f2"/>
<path d="M0.5 22 L8 14 L13 20 L19 12 L25 20 L30 14 L37.5 19 V27.5 H0.5 Z" fill="#a9defa"/>
</svg>
<!-- M365 -->
<svg class="a" style="left:1175px;top:1025px" width="34" height="38" viewBox="0 0 34 38">
<defs><linearGradient id="mg" x1="0" y1="0" x2="1" y2="1"><stop offset="0" stop-color="#3d8ff0"/><stop offset="0.5" stop-color="#7a5be0"/><stop offset="1" stop-color="#b258d8"/></linearGradient></defs>
<path d="M17 1 L33 10 V28 L17 37 L1 28 V10 Z" fill="url(#mg)"/>
<path d="M17 12 L24 16 V22 L17 26 L10 22 V16 Z" fill="#202125"/>
<path d="M24 8 L33 13 V20 L24 16 Z" fill="#36c5e8"/>
</svg>
<!-- active chrome -->
<div class="a" style="left:1228px;top:1014px;width:59px;height:60px;background:#2b2c31;border-radius:6px;border:1px solid #34353a"></div>
<svg class="a" style="left:1240px;top:1025.5px" width="37" height="37" viewBox="0 0 38 38">
<circle cx="19" cy="19" r="18.5" fill="#2da94f"/>
<path d="M19 19 L3 9.8 A18.5 18.5 0 0 1 35 9.8 Z" fill="#e33b2e"/>
<path d="M19 19 L35 9.8 A18.5 18.5 0 0 1 19 37.5 Z" fill="#fcc934"/>
<circle cx="19" cy="19" r="8.8" fill="#fff"/><circle cx="19" cy="19" r="6.9" fill="#3a7de8"/>
</svg>
<!-- settings -->
<svg class="a" style="left:1305px;top:1026px" width="38" height="36" viewBox="0 0 38 36">
<path d="M14 1 H24 L25.5 5.5 L30 8 L35 6.5 L38 12 L34.5 15.5 V20.5 L38 24 L35 29.5 L30 28 L25.5 30.5 L24 35 H14 L12.5 30.5 L8 28 L3 29.5 L0 24 L3.5 20.5 V15.5 L0 12 L3 6.5 L8 8 L12.5 5.5 Z" fill="#a8acb2"/>
<circle cx="19" cy="18" r="9" fill="#f2f6fa"/><circle cx="19" cy="18" r="6.6" fill="#1a66c8"/>
</svg>
<!-- indicators -->
<div class="a" style="left:660px;top:1068px;width:9px;height:4.5px;background:#9c9c9c;border-radius:3px"></div>
<div class="a" style="left:990px;top:1068px;width:9px;height:4.5px;background:#9c9c9c;border-radius:3px"></div>
<div class="a" style="left:1056px;top:1068px;width:9px;height:4.5px;background:#9c9c9c;border-radius:3px"></div>
<div class="a" style="left:1121.5px;top:1068px;width:9px;height:4.5px;background:#9c9c9c;border-radius:3px"></div>
<div class="a" style="left:1246px;top:1068px;width:25px;height:4.5px;background:#c4c4c4;border-radius:3px"></div>
<div class="a" style="left:1320px;top:1068px;width:9px;height:4.5px;background:#9c9c9c;border-radius:3px"></div>
<div class="t" style="left:1826.30px;top:1023.00px;font-size:18.36px;letter-spacing:-0.694px;color:#e6e6e6;font-weight:normal;font-style:normal;">8:01 PM</div>
<div class="t" style="left:1808.00px;top:1047.00px;font-size:18.79px;letter-spacing:-0.137px;color:#e6e6e6;font-weight:normal;font-style:normal;">8/28/2025</div>

</body></html>
